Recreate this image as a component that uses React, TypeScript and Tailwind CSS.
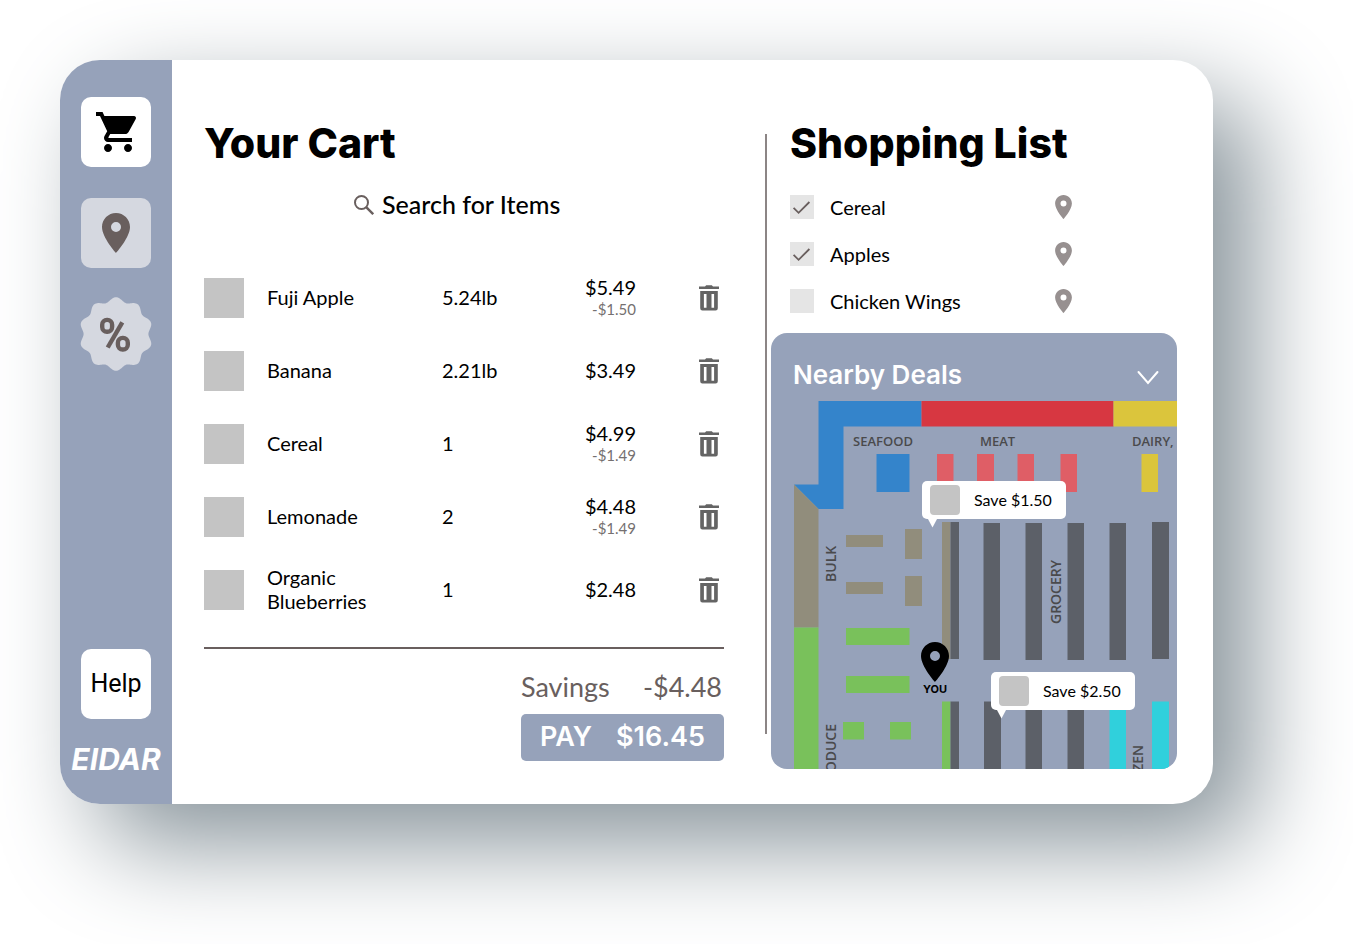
import React from "react";
import { MdShoppingCart, MdPlace } from "react-icons/md";

type CartItem = { name: string; qty: string; price: string; discount?: string };

const cart: CartItem[] = [
  { name: "Fuji Apple", qty: "5.24lb", price: "$5.49", discount: "-$1.50" },
  { name: "Banana", qty: "2.21lb", price: "$3.49" },
  { name: "Cereal", qty: "1", price: "$4.99", discount: "-$1.49" },
  { name: "Lemonade", qty: "2", price: "$4.48", discount: "-$1.49" },
  { name: "Organic Blueberries", qty: "1", price: "$2.48" },
];

const shoppingList = [
  { id: "cereal", name: "Cereal", done: true },
  { id: "apples", name: "Apples", done: true },
  { id: "wings", name: "Chicken Wings", done: false },
];

function TrashIcon() {
  return (
    <svg viewBox="0 0 20 26" className="h-[26px] w-5" fill="#646464" aria-hidden="true">
      <path d="M0 1.400h6L7.200.3h5.600L14 1.400h6v2.600H0z" />
      <path
        fillRule="evenodd"
        d="M1.200 6h17.600v17.300a2.200 2.200 0 0 1-2.200 2.200H3.400a2.200 2.200 0 0 1-2.200-2.200zM4.900 9v13.800h2.600V9zM12.500 9v13.800h2.600V9z"
      />
    </svg>
  );
}

function SearchIcon() {
  return (
    <svg viewBox="0 0 20 20" className="size-5" fill="none" stroke="#695f5e" aria-hidden="true">
      <circle cx="7.500" cy="7.500" r="6.500" strokeWidth="2" />
      <path d="M12.200 12.200 19.200 19.200" strokeWidth="2.400" />
    </svg>
  );
}

function DealsBadge() {
  const points: string[] = [];
  for (let i = 0; i < 240; i++) {
    const t = (i / 240) * Math.PI * 2;
    const r = 34.6 + 2.2 * Math.cos(10 * t);
    points.push(`${(36 + r * Math.sin(t)).toFixed(2)},${(37 - r * Math.cos(t)).toFixed(2)}`);
  }
  return (
    <svg viewBox="0 0 72 74" className="h-[74px] w-[72px]" aria-hidden="true">
      <polygon points={points.join(" ")} fill="#d5d8e0" />
      <g fill="none" stroke="#695f5e" strokeWidth="4.400">
        <rect x="22.200" y="22.900" width="9.900" height="11.900" rx="4.800" />
        <rect x="37.900" y="40.900" width="9.900" height="11.600" rx="4.800" />
        <path d="M42.300 25.300 27.700 50.500" />
      </g>
    </svg>
  );
}

function StoreMap() {
  return (
    <svg viewBox="771 401 406 368" className="block w-full" role="img" aria-label="Store map">
      <path d="M818.500 401h103v25.500h-78V509h-25L794 484.500h24.500z" fill="#3484cb" />
      <path d="M921.500 401h192v25.500h-192z" fill="#d73741" />
      <path d="M1113.500 401H1177v25.500h-63.500z" fill="#dbc53c" />
      <path d="M876.500 454h33v38h-33z" fill="#3484cb" />
      <path d="M937 454h16.500v38H937zM977 454h17v38h-17zM1017.500 454h16.500v38h-16.500zM1060.500 454h16.500v38h-16.500z" fill="#df5e66" />
      <path d="M1141.500 454h16.500v38h-16.500z" fill="#dbc53c" />
      <path d="M794 484.500 818.500 509v118.500H794zM846 535h37v12h-37zM846 582h37v12h-37zM905 529h17v30h-17zM905 576h17v30h-17zM942 522h8.500v137H942z" fill="#918d7c" />
      <path d="M794 627.500h24.500V769H794zM846 628h63.500v17H846zM846 676h63.500v17H846zM843 722h21v17.500h-21zM890 722h21v17.500h-21zM942 701.500h8.500V769H942z" fill="#79c15b" />
      <path
        d="M950.500 522h8.500v137h-8.500zM983.500 523h16.500v137h-16.500zM1025.500 523h16.500v137h-16.500zM1067.500 523h16.500v137h-16.500zM1109.500 523h16.500v137h-16.500zM1152 522h17v137h-17zM950.500 701.500h8.500V769h-8.500zM984 701.500h17V769h-17zM1025.500 701.500h16.500V769h-16.500zM1067.500 701.500h16.500V769h-16.500z"
        fill="#5c6068"
      />
      <path d="M1109.500 701.500h16.500V769h-16.500zM1152 701.500h17V769h-17z" fill="#30d0dc" />
      <g className="font-['Open_Sans',sans-serif] text-[13px] font-semibold" fill="#4a4a4c">
        <text x="853" y="446">SEAFOOD</text>
        <text x="980" y="446">MEAT</text>
        <text x="1132" y="446">DAIRY,</text>
      </g>
      <g className="font-['Open_Sans',sans-serif] text-sm font-semibold" fill="#4a4a4c">
        <text transform="translate(836 582) rotate(-90)">BULK</text>
        <text transform="translate(1061 624) rotate(-90)">GROCERY</text>
        <text transform="translate(836 724) rotate(-90)" textAnchor="end">PRODUCE</text>
        <text transform="translate(1143 745) rotate(-90)" textAnchor="end">FROZEN</text>
      </g>
    </svg>
  );
}

function DealCallout({ text, place }: { text: string; place: string }) {
  return (
    <div className={`absolute flex h-[38px] w-36 items-center gap-3.5 rounded-[5px] bg-white px-2 ${place}`}>
      <span className="size-[30px] rounded bg-[#c4c4c4]" />
      <span className="text-base text-black">{text}</span>
      <svg viewBox="0 0 9 9" className="absolute top-full left-1.5 size-[9px]" fill="#fff" aria-hidden="true">
        <path d="M0 0h9L4.500 8.500z" />
      </svg>
    </div>
  );
}

export default function App() {
  return (
    <div className="min-h-screen bg-white pt-[60px] pr-[140px] pb-[140px] pl-[60px] font-[Lato,sans-serif] text-black">
      <div className="flex overflow-hidden rounded-[40px] bg-white shadow-[40px_40px_100px_#87939a]">
        <nav className="flex w-28 shrink-0 flex-col items-center bg-[#96a2ba] pt-[37px] pb-[29px]">
          <button aria-label="Cart" className="flex size-[70px] items-center justify-center rounded-[10px] bg-white pl-1">
            <MdShoppingCart className="size-12" />
          </button>
          <button aria-label="Map" className="mt-[31px] flex size-[70px] items-center justify-center rounded-[10px] bg-[#d5d8e0] text-[#695f5e]">
            <MdPlace className="size-12" />
          </button>
          <button aria-label="Deals" className="mt-[29px]">
            <DealsBadge />
          </button>
          <button className="mt-auto size-[70px] rounded-[10px] bg-white font-[Roboto,sans-serif] text-[25px]">Help</button>
          <div className="mt-6 font-[Inter,sans-serif] text-[30px] leading-8 font-bold text-white italic">EIDAR</div>
        </nav>

        <main className="flex flex-1 pr-9 pl-8">
          <section className="flex flex-1 flex-col pt-[59px] pb-[43px]">
            <h1 className="font-[Inter,sans-serif] text-[41px] leading-12 font-extrabold">Your Cart</h1>
            <div className="mt-6 flex items-center justify-center gap-2 pr-2">
              <label htmlFor="search" aria-label="Search">
                <SearchIcon />
              </label>
              <input
                id="search"
                type="text"
                placeholder="Search for Items"
                className="h-7 w-[184px] text-[25px] font-medium outline-none placeholder:text-black placeholder:opacity-100"
              />
            </div>
            <table className="mt-[42px] w-full table-fixed text-xl leading-6">
              <colgroup>
                <col className="w-[63px]" />
                <col className="w-[175px]" />
                <col />
                <col className="w-[84px]" />
                <col className="w-[88px]" />
              </colgroup>
              <tbody>
                {cart.map((item) => (
                  <tr key={item.name} className="h-[73px]">
                    <td className="p-0">
                      <div className="size-10 bg-[#c4c4c4]" />
                    </td>
                    <td className="pt-0 pr-16 pb-0.5 pl-0">{item.name}</td>
                    <td className="px-0 pt-0 pb-0.5">{item.qty}</td>
                    <td className="px-0 pt-0 pb-0.5 text-right">
                      {item.price}
                      {item.discount && <div className="text-[15px] leading-5 text-[#757070]">{item.discount}</div>}
                    </td>
                    <td className="py-0 pr-[5px] pl-0">
                      <button aria-label={`Remove ${item.name}`} className="ml-auto block">
                        <TrashIcon />
                      </button>
                    </td>
                  </tr>
                ))}
              </tbody>
            </table>
            <hr className="mt-[21px] border-t-2 border-[#695f5e]" />
            <div className="mt-5 ml-auto w-[203px]">
              <div className="flex justify-between pr-0.5 text-[27px] leading-9 text-[#695f5e]">
                <span>Savings</span>
                <span>-$4.48</span>
              </div>
              <button className="mt-[9px] flex h-[47px] w-full items-center justify-between rounded-[5px] bg-[#96a2ba] px-[19px] font-[Inter,sans-serif] text-[27px] font-semibold text-white">
                <span>PAY</span>
                <span>$16.45</span>
              </button>
            </div>
          </section>

          <div className="mt-[74px] mb-[70px] ml-[41px] w-0.5 shrink-0 bg-[#8c8585]" />

          <aside className="ml-1 w-[406px] shrink-0 pt-[59px] pb-[35px]">
            <h2 className="ml-[19px] font-[Inter,sans-serif] text-[41px] leading-12 font-extrabold">Shopping List</h2>
            <ul className="mt-7 ml-[19px] flex flex-col gap-[23px] text-xl leading-6">
              {shoppingList.map((item) => (
                <li key={item.id} className="flex items-center">
                  <span className="grid size-6">
                    <input
                      id={item.id}
                      type="checkbox"
                      defaultChecked={item.done}
                      className="peer col-start-1 row-start-1 size-6 appearance-none bg-[#e5e5e5]"
                    />
                    <svg
                      viewBox="0 0 24 24"
                      className="pointer-events-none invisible col-start-1 row-start-1 size-6 peer-checked:visible"
                      fill="none"
                      stroke="#695f5e"
                      strokeWidth="1.800"
                      aria-hidden="true"
                    >
                      <path d="M3.600 12.800 8.600 17.800 19.400 7" />
                    </svg>
                  </span>
                  <label htmlFor={item.id} className="ml-4 w-[225px]">
                    {item.name}
                  </label>
                  <button aria-label={`Locate ${item.name}`} className="text-[#979090]">
                    <svg viewBox="5 2 14 20" className="h-6 w-[17px]" fill="currentColor" aria-hidden="true">
                      <path d="M12 2C8.130 2 5 5.130 5 9c0 5.250 7 13 7 13s7-7.750 7-13c0-3.870-3.130-7-7-7zm0 9.500a2.500 2.500 0 0 1 0-5 2.500 2.500 0 0 1 0 5z" />
                    </svg>
                  </button>
                </li>
              ))}
            </ul>

            <section className="mt-5 overflow-hidden rounded-2xl bg-[#96a2ba]">
              <header className="flex h-[68px] items-center justify-between pt-3.5 pr-[17px] pl-[22px]">
                <h3 className="font-[Inter,sans-serif] text-[26px] font-semibold text-white">Nearby Deals</h3>
                <button aria-label="Collapse nearby deals">
                  <svg viewBox="0 0 24 16" className="mt-1.5 h-4 w-6" fill="none" stroke="#fff" strokeWidth="2" strokeLinecap="round" aria-hidden="true">
                    <path d="M2.500 3 12 14 21.500 3" />
                  </svg>
                </button>
              </header>
              <div className="relative">
                <StoreMap />
                <DealCallout text="Save $1.50" place="left-[151px] top-20" />
                <DealCallout text="Save $2.50" place="left-[220px] top-[271px]" />
                <div className="absolute top-[241px] left-[150px] flex flex-col items-center">
                  <svg viewBox="5 2 14 20" className="h-10 w-7" aria-hidden="true">
                    <path d="M12 2C8.130 2 5 5.130 5 9c0 5.250 7 13 7 13s7-7.750 7-13c0-3.870-3.130-7-7-7zm0 9.500a2.500 2.500 0 0 1 0-5 2.500 2.500 0 0 1 0 5z" />
                  </svg>
                  <span className="font-[Inter,sans-serif] text-[11px] leading-[14px] font-bold">YOU</span>
                </div>
              </div>
            </section>
          </aside>
        </main>
      </div>
    </div>
  );
}
